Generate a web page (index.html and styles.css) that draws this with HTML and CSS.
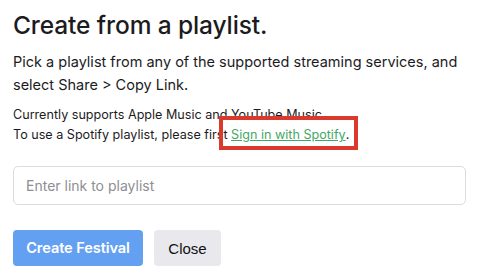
FILE: index.html
```html
<!DOCTYPE html>
<html>
<head>
<meta charset="utf-8">
<link rel="stylesheet" href="styles.css">
</head>
<body>
<main class="dialog">
  <h1 class="title">Create from a playlist.</h1>
  <p class="lead">Pick a playlist from any of the supported streaming services, and select Share &gt; Copy Link.</p>
  <p class="note">Currently supports Apple Music and YouTube Music.<br>To use a Spotify playlist, please first <span class="highlight"><a class="link" href="#">Sign in with Spotify</a></span>.</p>
  <input class="field" type="text" placeholder="Enter link to playlist">
  <div class="actions">
    <button class="btn btn-primary">Create Festival</button>
    <button class="btn btn-secondary">Close</button>
  </div>
</main>
</body>
</html>
```
FILE: styles.css
```css
html, body {
  margin: 0;
  padding: 0;
  background: #ffffff;
}
.dialog {
  padding: 9px 0 0 13px;
  font-family: "Inter", "Noto Sans", sans-serif;
  color: #1c1c1e;
}
.title {
  margin: 0;
  font-size: 24.5px;
  font-weight: 500;
  line-height: 32px;
  letter-spacing: -0.1px;
}
.lead {
  margin: 9px 0 0;
  font-size: 14.5px;
  line-height: 23px;
}
.note {
  margin: 9px 0 0;
  font-size: 12.6px;
  line-height: 20px;
}
.highlight {
  position: relative;
}
.highlight::after {
  content: "";
  position: absolute;
  left: -12px;
  right: -12px;
  top: -11px;
  bottom: -8px;
  border: 4px solid #d93a2b;
}
.link {
  color: #3fa866;
  text-decoration: underline;
}
.field {
  display: block;
  box-sizing: border-box;
  width: 453px;
  height: 39px;
  margin-top: 21px;
  padding: 0 12px;
  border: 1px solid #dcdcdc;
  border-radius: 5px;
  font-family: "Inter", sans-serif;
  font-size: 14px;
  color: #333;
}
.field::placeholder {
  color: #8e8e93;
}
.actions {
  display: flex;
  gap: 11px;
  margin-top: 25px;
}
.btn {
  height: 36px;
  border: none;
  border-radius: 4px;
  padding: 0;
  white-space: nowrap;
}
.btn-primary {
  width: 130px;
  background: #64a0f2;
  color: #ffffff;
  font-family: "Inter", sans-serif;
  font-weight: 600;
  font-size: 14.6px;
  letter-spacing: -0.1px;
}
.btn-secondary {
  width: 67px;
  background: #e8e8ed;
  color: #111;
  font-family: "Liberation Sans", Arial, sans-serif;
  font-size: 15px;
}
```
